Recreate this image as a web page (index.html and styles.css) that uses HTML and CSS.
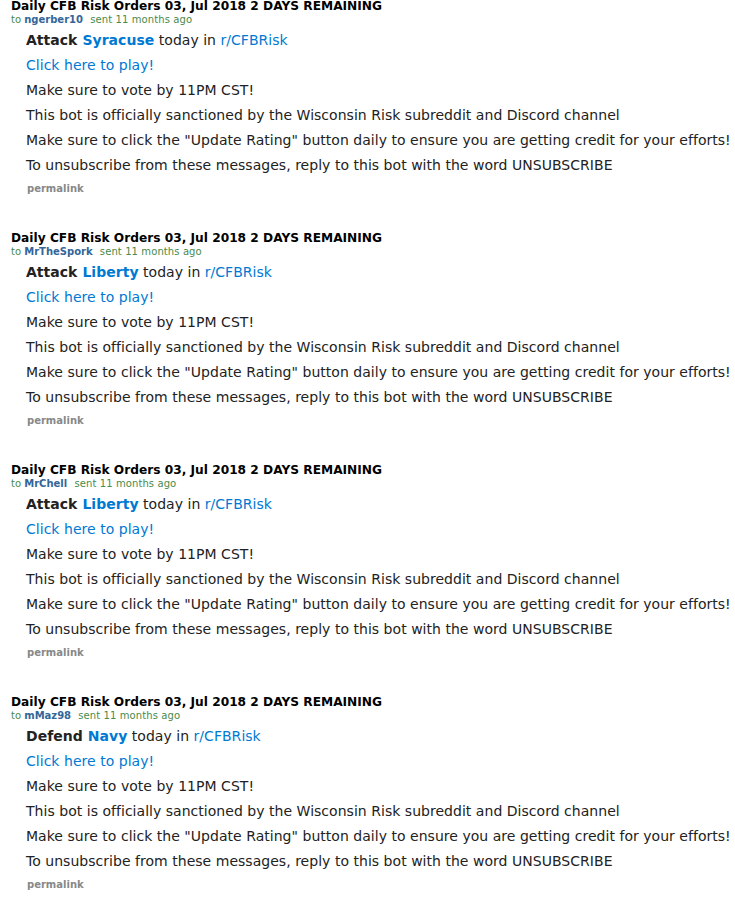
FILE: index.html
```html
<!DOCTYPE html>
<html>
<head>
<meta charset="utf-8">
<link rel="stylesheet" href="styles.css">
</head>
<body>
<div class="message">
  <div class="subject">Daily CFB Risk Orders 03, Jul 2018 2 DAYS REMAINING</div>
  <div class="tagline">to <a class="author">ngerber10</a> <span class="sent">sent 11 months ago</span></div>
  <div class="md">
    <p><strong>Attack <a class="link">Syracuse</a></strong> today in <a class="link">r/CFBRisk</a></p>
    <p><a class="link">Click here to play!</a></p>
    <p>Make sure to vote by 11PM CST!</p>
    <p>This bot is officially sanctioned by the Wisconsin Risk subreddit and Discord channel</p>
    <p>Make sure to click the "Update Rating" button daily to ensure you are getting credit for your efforts!</p>
    <p>To unsubscribe from these messages, reply to this bot with the word UNSUBSCRIBE</p>
  </div>
  <div class="buttons"><a class="permalink">permalink</a></div>
</div>
<div class="message">
  <div class="subject">Daily CFB Risk Orders 03, Jul 2018 2 DAYS REMAINING</div>
  <div class="tagline">to <a class="author">MrTheSpork</a> <span class="sent">sent 11 months ago</span></div>
  <div class="md">
    <p><strong>Attack <a class="link">Liberty</a></strong> today in <a class="link">r/CFBRisk</a></p>
    <p><a class="link">Click here to play!</a></p>
    <p>Make sure to vote by 11PM CST!</p>
    <p>This bot is officially sanctioned by the Wisconsin Risk subreddit and Discord channel</p>
    <p>Make sure to click the "Update Rating" button daily to ensure you are getting credit for your efforts!</p>
    <p>To unsubscribe from these messages, reply to this bot with the word UNSUBSCRIBE</p>
  </div>
  <div class="buttons"><a class="permalink">permalink</a></div>
</div>
<div class="message">
  <div class="subject">Daily CFB Risk Orders 03, Jul 2018 2 DAYS REMAINING</div>
  <div class="tagline">to <a class="author">MrChell</a> <span class="sent">sent 11 months ago</span></div>
  <div class="md">
    <p><strong>Attack <a class="link">Liberty</a></strong> today in <a class="link">r/CFBRisk</a></p>
    <p><a class="link">Click here to play!</a></p>
    <p>Make sure to vote by 11PM CST!</p>
    <p>This bot is officially sanctioned by the Wisconsin Risk subreddit and Discord channel</p>
    <p>Make sure to click the "Update Rating" button daily to ensure you are getting credit for your efforts!</p>
    <p>To unsubscribe from these messages, reply to this bot with the word UNSUBSCRIBE</p>
  </div>
  <div class="buttons"><a class="permalink">permalink</a></div>
</div>
<div class="message">
  <div class="subject">Daily CFB Risk Orders 03, Jul 2018 2 DAYS REMAINING</div>
  <div class="tagline">to <a class="author">mMaz98</a> <span class="sent">sent 11 months ago</span></div>
  <div class="md">
    <p><strong>Defend <a class="link">Navy</a></strong> today in <a class="link">r/CFBRisk</a></p>
    <p><a class="link">Click here to play!</a></p>
    <p>Make sure to vote by 11PM CST!</p>
    <p>This bot is officially sanctioned by the Wisconsin Risk subreddit and Discord channel</p>
    <p>Make sure to click the "Update Rating" button daily to ensure you are getting credit for your efforts!</p>
    <p>To unsubscribe from these messages, reply to this bot with the word UNSUBSCRIBE</p>
  </div>
  <div class="buttons"><a class="permalink">permalink</a></div>
</div>
</body>
</html>
```
FILE: styles.css
```css
html, body {
  margin: 0;
  padding: 0;
  background: #fff;
}
body {
  font-family: "DejaVu Sans", Verdana, sans-serif;
  color: #222;
  width: 735px;
  overflow: hidden;
}
.message {
  padding-left: 11px;
  margin-bottom: 36px;
}
.subject {
  font-size: 12.2px;
  font-weight: bold;
  line-height: 13px;
  color: #000;
  white-space: nowrap;
}
.tagline {
  font-size: 10px;
  line-height: 12px;
  padding-top: 1px;
  color: #4a8a4a;
}
.author {
  color: #369;
  font-weight: bold;
}
.sent {
  margin-left: 4px;
  letter-spacing: 0.1px;
}
.md {
  margin-top: 4px;
  padding-left: 15px;
  font-size: 14px;
  line-height: 20px;
  color: #222;
  white-space: nowrap;
  letter-spacing: 0.03px;
}
.md p {
  margin: 0 0 5px 0;
}
.md strong {
  font-weight: bold;
}
.link {
  color: #0079d3;
}
.buttons {
  padding-left: 16px;
  line-height: 14px;
  margin-top: 1px;
}
.permalink {
  font-size: 10px;
  font-weight: bold;
  color: #888;
}
```
